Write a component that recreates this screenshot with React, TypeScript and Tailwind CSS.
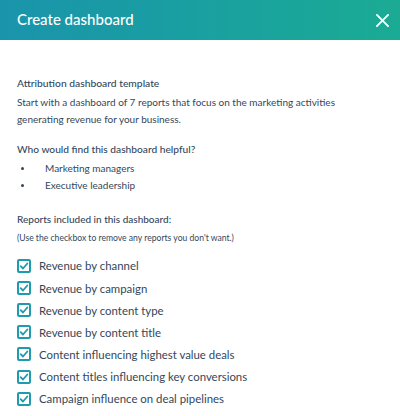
import React from "react";

const reports = [
  "Revenue by channel",
  "Revenue by campaign",
  "Revenue by content type",
  "Revenue by content title",
  "Content influencing highest value deals",
  "Content titles influencing key conversions",
  "Campaign influence on deal pipelines",
];

function Check() {
  return (
    <span className="flex h-[14px] w-[14px] shrink-0 items-center justify-center rounded-[2px] border-2 border-[#1f9bb0] bg-white">
      <svg viewBox="0 0 12 12" className="h-[10px] w-[10px]" fill="none">
        <path d="M2 6.2 L4.8 9 L10 3" stroke="#1f9bb0" strokeWidth="2.2" strokeLinecap="round" strokeLinejoin="round" />
      </svg>
    </span>
  );
}

export default function App() {
  return (
    <div className="h-[416px] w-[400px] overflow-hidden bg-white text-[#33475b]" style={{ fontFamily: "Lato, 'Noto Sans', sans-serif" }}>
      <div className="flex h-[40px] items-center justify-between bg-gradient-to-r from-[#1a94ab] to-[#1bab94] pl-[17px] pr-[11px]">
        <span className="-mt-[2px] text-[15px] font-medium text-white">Create dashboard</span>
        <svg viewBox="0 0 14 14" className="h-[13px] w-[13px]" fill="none">
          <path d="M1 1 L13 13 M13 1 L1 13" stroke="white" strokeWidth="2" strokeLinecap="round" />
        </svg>
      </div>
      <div className="px-[17px] pt-[35px]">
        <div className="text-[10.3px] font-medium leading-[16px]">Attribution dashboard template</div>
        <p className="mt-[3px] text-[10px] leading-[17px]">
          Start with a dashboard of 7 reports that focus on the marketing activities generating revenue for your business.
        </p>
        <div className="mt-[13px] text-[10.2px] font-medium leading-[16px]">Who would find this dashboard helpful?</div>
        <ul className="mt-[3px] text-[10px] leading-[17px]">
          <li className="flex items-center gap-[21px] pl-[4px]"><span className="h-[3px] w-[3px] rounded-full bg-[#33475b]" />Marketing managers</li>
          <li className="flex items-center gap-[21px] pl-[4px]"><span className="h-[3px] w-[3px] rounded-full bg-[#33475b]" />Executive leadership</li>
        </ul>
        <div className="mt-[17px] text-[10px] font-medium leading-[16px]">Reports included in this dashboard:</div>
        <div className="mt-[3px] text-[8.6px] leading-[16px]">(Use the checkbox to remove any reports you don't want.)</div>
        <div className="mt-[9px] flex flex-col">
          {reports.map((r) => (
            <div key={r} className="flex h-[22.1px] items-center gap-[8px]">
              <Check />
              <span className="text-[11.4px]">{r}</span>
            </div>
          ))}
        </div>
      </div>
    </div>
  );
}
